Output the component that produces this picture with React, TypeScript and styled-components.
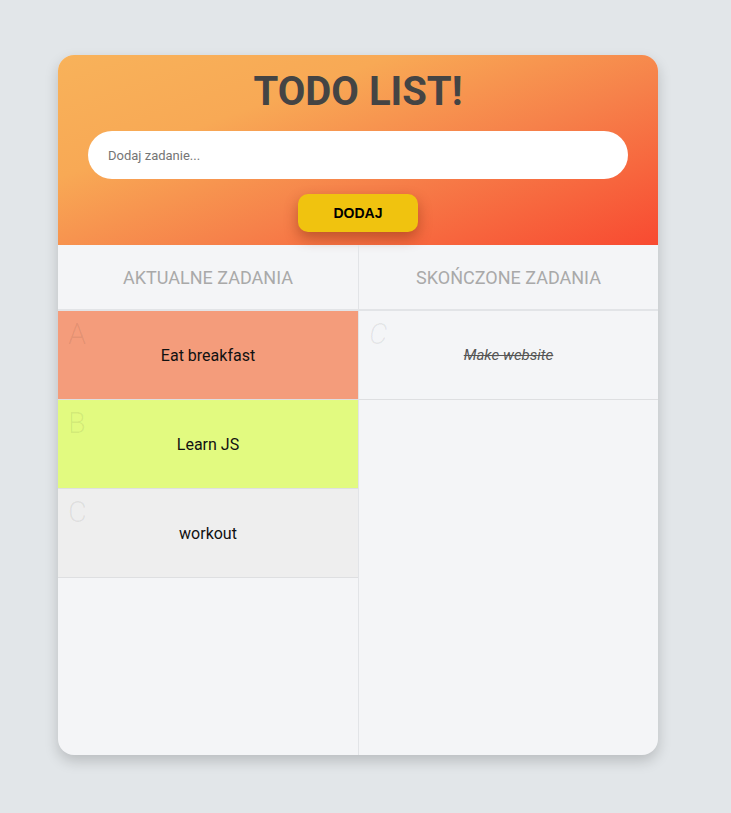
import React from "react";
import styled, { createGlobalStyle } from "styled-components";

const Global = createGlobalStyle`
  html, body { margin: 0; padding: 0; }
  body {
    background: #e2e6e9;
    font-family: Roboto, "Noto Sans", sans-serif;
    min-height: 813px;
  }
`;

const Page = styled.div`
  padding: 55px 0 0 58px;
`;

const Card = styled.div`
  width: 600px;
  height: 700px;
  border-radius: 16px;
  background: #f4f5f7;
  box-shadow: 0 6px 14px rgba(0, 0, 0, 0.18);
  overflow: hidden;
  display: flex;
  flex-direction: column;
`;

const Header = styled.div`
  height: 190px;
  box-sizing: border-box;
  background: linear-gradient(160deg, #f8b25a 0%, #f8a955 30%, #f6814a 60%, #f84a31 100%);
  display: flex;
  flex-direction: column;
  align-items: center;
  padding-top: 14px;
`;

const Title = styled.h1`
  margin: 0;
  font-family: Roboto, sans-serif;
  font-weight: 700;
  font-size: 40px;
  line-height: 46px;
  color: #444;
`;

const Input = styled.input`
  margin-top: 16px;
  width: 540px;
  height: 48px;
  box-sizing: border-box;
  border: none;
  border-radius: 24px;
  background: #fff;
  padding: 0 20px;
  font-family: Roboto, sans-serif;
  font-size: 13px;
  outline: none;
  &::placeholder { color: #757575; }
`;

const Button = styled.button`
  margin-top: 15px;
  width: 120px;
  height: 38px;
  border: none;
  border-radius: 10px;
  background: #f0c30f;
  font-family: "Liberation Sans", Arial, sans-serif;
  font-weight: 700;
  font-size: 14px;
  color: #000;
  box-shadow: 0 6px 14px rgba(120, 40, 10, 0.45);
`;

const Columns = styled.div`
  flex: 1;
  display: grid;
  grid-template-columns: 301px 1fr;
`;

const Column = styled.div<{ $last?: boolean }>`
  display: flex;
  flex-direction: column;
  border-right: ${(p) => (p.$last ? "none" : "1px solid #e2e4e7")};
`;

const ColHeader = styled.div`
  height: 64px;
  border-bottom: 2px solid #e2e4e7;
  display: flex;
  align-items: center;
  justify-content: center;
  font-size: 18px;
  color: #a9a9a9;
  text-transform: uppercase;
`;

const Task = styled.div<{ $bg: string }>`
  position: relative;
  height: 88px;
  border-bottom: 1px solid #dedfe1;
  background: ${(p) => p.$bg};
  display: flex;
  align-items: center;
  justify-content: center;
  font-size: 16px;
  color: #111;
`;

const Letter = styled.span<{ $italic?: boolean }>`
  position: absolute;
  left: 10px;
  top: 6px;
  font-size: 29px;
  font-weight: 300;
  font-style: ${(p) => (p.$italic ? "italic" : "normal")};
  color: rgba(0, 0, 0, 0.07);
`;

const DoneText = styled.span`
  font-style: italic;
  text-decoration: line-through;
  color: #555;
  font-size: 15px;
`;

const current = [
  { p: "A", t: "Eat breakfast", bg: "#f49c7b" },
  { p: "B", t: "Learn JS", bg: "#e2fa80" },
  { p: "C", t: "workout", bg: "#eeeeee" },
];

export default function App() {
  return (
    <Page>
      <Global />
      <Card>
        <Header>
          <Title>TODO LIST!</Title>
          <Input placeholder="Dodaj zadanie..." />
          <Button>DODAJ</Button>
        </Header>
        <Columns>
          <Column>
            <ColHeader>Aktualne zadania</ColHeader>
            {current.map((c) => (
              <Task key={c.t} $bg={c.bg}>
                <Letter>{c.p}</Letter>
                {c.t}
              </Task>
            ))}
          </Column>
          <Column $last>
            <ColHeader>Skończone zadania</ColHeader>
            <Task $bg="#f4f5f7">
              <Letter $italic>C</Letter>
              <DoneText>Make website</DoneText>
            </Task>
          </Column>
        </Columns>
      </Card>
    </Page>
  );
}
